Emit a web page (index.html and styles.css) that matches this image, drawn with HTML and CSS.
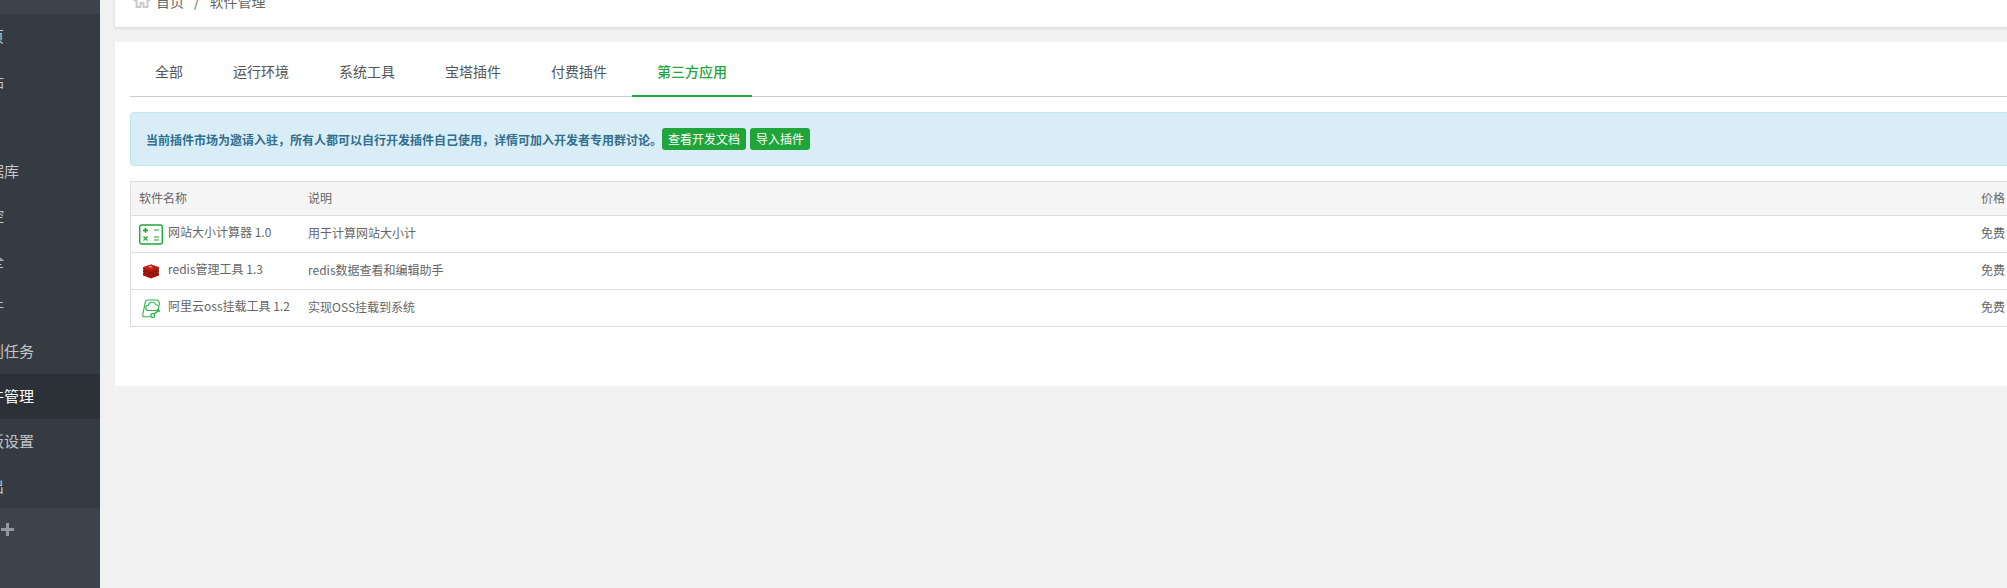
FILE: index.html
```html
<!DOCTYPE html>
<html lang="zh-CN">
<head>
<meta charset="utf-8">
<title>软件管理</title>
<link rel="stylesheet" href="styles.css">
</head>
<body>
<div class="app">
  <aside class="sidebar">
    <div class="side-top"></div>
    <ul class="menu">
      <li>首页</li>
      <li>网站</li>
      <li class="ftp">FTP</li>
      <li>数据库</li>
      <li>监控</li>
      <li>安全</li>
      <li>文件</li>
      <li>计划任务</li>
      <li class="active">软件管理</li>
      <li>面板设置</li>
      <li class="last">退出</li>
    </ul>
    <div class="side-bottom"><span class="plus"></span></div>
  </aside>
  <main class="main">
    <div class="crumb">
      <svg class="home" viewBox="0 0 18 14" width="18" height="14"><path d="M1 7 9 1l8 6M3.500 5.500V13h4V9h3v4h4V5.500" fill="#fafafa" stroke="#c8c8c8" stroke-width="1.800"/></svg>
      <span>首页</span><span class="sep">/</span><span>软件管理</span>
    </div>
    <section class="card">
      <nav class="tabs">
        <a>全部</a><a>运行环境</a><a>系统工具</a><a>宝塔插件</a><a>付费插件</a><a class="on">第三方应用</a>
      </nav>
      <div class="alert">
        <span>当前插件市场为邀请入驻，所有人都可以自行开发插件自己使用，详情可加入开发者专用群讨论。</span>
        <a class="btn">查看开发文档</a><a class="btn">导入插件</a>
      </div>
      <div class="table">
        <div class="row head"><div class="c-name">软件名称</div><div class="c-desc">说明</div><div class="c-price">价格</div></div>
        <div class="row">
          <div class="c-name">
            <svg class="ico" viewBox="0 0 24 24" width="24" height="24"><rect x=".7" y="3" width="22.600" height="19" rx="2" fill="#fff" stroke="#20a53a" stroke-width="1.400"/><path d="M6.500 5.800v5M4 8.300h5" fill="none" stroke="#20a53a" stroke-width="1.700"/><path d="M15 8h5M4.500 14.500l4 4M8.500 14.500l-4 4M15 15h5M15 18h5" fill="none" stroke="#20a53a" stroke-width="1.200"/></svg>
            <span>网站大小计算器 1.0</span>
          </div>
          <div class="c-desc">用于计算网站大小计</div><div class="c-price">免费</div>
        </div>
        <div class="row">
          <div class="c-name">
            <svg class="ico" viewBox="0 0 24 24" width="24" height="24"><path d="M12 5.500l8 2.800v2l-1 .6 1 .5v2l-1 .6 1 .5v2l-8 3-8-3v-2l1-.5-1-.6v-2l1-.5-1-.6v-2z" fill="#a8190f"/><path d="M12 5.500l8 2.800-8 2.900-8-2.900z" fill="#c9241a"/><path d="M4 11.200l8 2.900 8-2.900M4 14.200l8 2.900 8-2.900" fill="none" stroke="#7d120a" stroke-width=".8"/><ellipse cx="11.500" cy="7.800" rx="1.800" ry=".8" fill="#eda8a2"/><path d="M15 9l2-.7-2-.6z" fill="#6f0f08"/></svg>
            <span>redis管理工具 1.3</span>
          </div>
          <div class="c-desc">redis数据查看和编辑助手</div><div class="c-price">免费</div>
        </div>
        <div class="row">
          <div class="c-name">
            <svg class="ico" viewBox="0 0 24 24" width="24" height="24"><path d="M11 20.800H5.500c-1.500 0-2-1-1.700-2.300L6.300 5.800C6.600 4.500 7.200 4 8.500 4h9.300c1.300 0 2 .6 2.200 1.800l.7 3.700" fill="none" stroke="#2fb24c" stroke-width="1.100"/><path d="M9.500 14.500a2.600 2.600 0 0 1-.2-5.200 4 4 0 0 1 7.600-.6 2.900 2.900 0 0 1 .1 5.800H9.500z" fill="none" stroke="#2fb24c" stroke-width="1.100"/><circle cx="13.700" cy="19.500" r="1.900" fill="none" stroke="#2fb24c" stroke-width="1.300"/><path d="M15.200 18l5-4.200M18.500 13.300l2.200 2.300" fill="none" stroke="#2fb24c" stroke-width="1.600"/></svg>
            <span>阿里云oss挂载工具 1.2</span>
          </div>
          <div class="c-desc">实现OSS挂载到系统</div><div class="c-price">免费</div>
        </div>
      </div>
    </section>
  </main>
</div>
</body>
</html>
```
FILE: styles.css
```css
* { box-sizing: border-box; }
html, body { margin: 0; height: 100%; overflow: hidden; }
body { font-family: "Noto Sans CJK SC", "Noto Sans", sans-serif; font-size: 12px; color: #666; background: #f1f1f1; }
a { text-decoration: none; }

.app { display: flex; height: 588px; width: 2007px; overflow: hidden; }

.sidebar { flex: 0 0 100px; width: 100px; background: #3c434c; overflow: hidden; display: flex; flex-direction: column; }
.side-top { height: 14px; background: #3c434c; }
.menu { list-style: none; margin: 0; padding: 0; background: #353b43; }
.menu li { height: 45px; line-height: 43px; font-size: 15px; color: #c3c6c9; margin-left: -26px; white-space: nowrap; width: 126px; }
.menu li.ftp { letter-spacing: -1px; }
.menu li.last { height: 44px; }
.menu li.active { background: #2c3138; color: #fff; }
.side-bottom { height: 42px; display: flex; align-items: center; }
.plus { display: block; width: 13px; height: 13px; margin-left: 1px; background: linear-gradient(#94989d, #94989d) center / 13px 3px no-repeat, linear-gradient(#94989d, #94989d) center / 3px 13px no-repeat; }

.main { flex: 0 0 1907px; padding-left: 15px; min-width: 0; }
.crumb { width: 2000px; height: 50px; margin-top: -23px; padding: 0 0 2px 18px; background: #fff; box-shadow: 0 1px 3px rgba(0,0,0,.12); display: flex; align-items: center; font-size: 14px; line-height: 20px; color: #666; }
.home { margin-right: 5px; }
.sep { margin: 0 10px; }

.card { width: 2000px; margin-top: 15px; padding: 0 15px; height: 344px; background: #fff; }
.tabs { display: flex; height: 55px; border-bottom: 1px solid #ccc; width: 1877px; }
.tabs a { padding: 0 25px; line-height: 58px; height: 55px; font-size: 14px; color: #555; white-space: nowrap; }
.tabs a.on { color: #20a53a; font-weight: 500; border-bottom: 2px solid #20a53a; }

.alert { width: 1900px; height: 54px; margin-top: 15px; padding-left: 15px; display: flex; align-items: center; border: 1px solid #bce8f1; border-radius: 4px; background: #d9edf7; color: #31708f; font-size: 12px; font-weight: 700; }
.btn { height: 22px; line-height: 21px; padding: 0 6px; background: #20a53a; color: #fff; border-radius: 3px; font-weight: 400; white-space: nowrap; }
.btn + .btn { margin-left: 4px; }

.table { width: 1900px; margin-top: 15px; border: 1px solid #ddd; border-right: 0; }
.row { display: flex; align-items: center; height: 37px; border-bottom: 1px solid #ddd; }
.row:last-child { border-bottom: 0; height: 36px; }
.row.head { height: 34px; background: #f5f5f5; }
.c-name { flex: 0 0 177px; padding-left: 8px; display: flex; align-items: center; gap: 5px; white-space: nowrap; }
.c-name span { padding-bottom: 6px; }
.row.head .c-name { padding-bottom: 2px; }
.ico { flex: none; }
.c-desc { flex: 0 0 1673px; padding-bottom: 4px; white-space: nowrap; }
.c-price { padding-bottom: 4px; white-space: nowrap; }
.row.head .c-desc, .row.head .c-price { padding-bottom: 2px; }
```
